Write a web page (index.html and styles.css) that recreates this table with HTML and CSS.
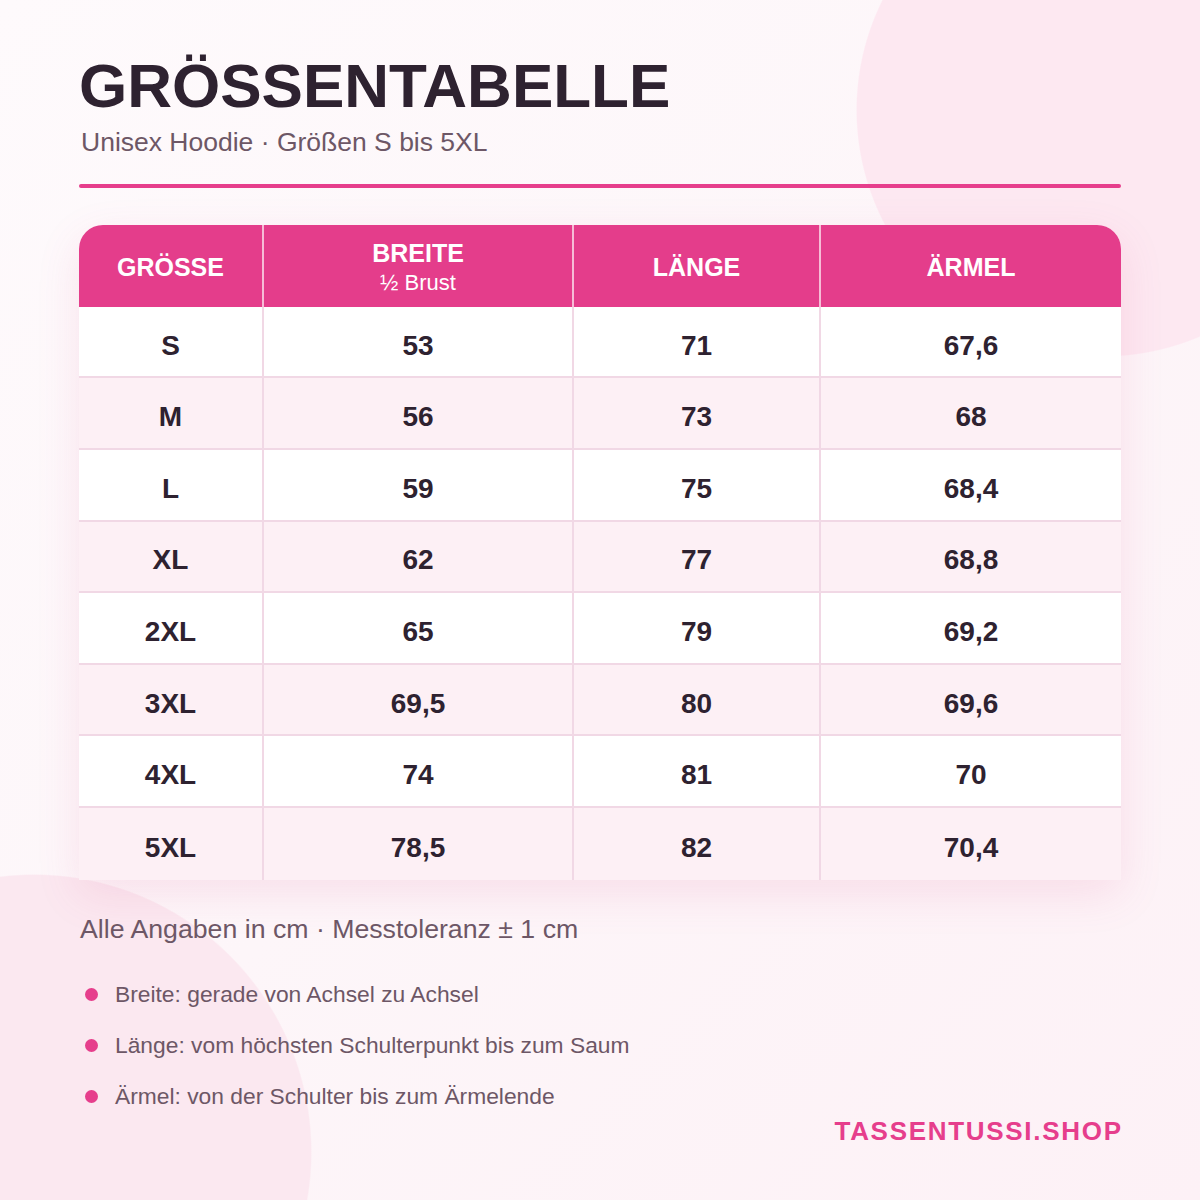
FILE: index.html
```html
<!DOCTYPE html>
<html lang="de">
<head>
<meta charset="utf-8">
<title>Größentabelle</title>
<link rel="stylesheet" href="styles.css">
</head>
<body>
<main class="page">
  <header class="head">
    <h1 class="title">GRÖSSENTABELLE</h1>
    <p class="subtitle">Unisex Hoodie · Größen S bis 5XL</p>
    <div class="rule"></div>
  </header>

  <section class="table">
    <div class="row row--head">
      <div class="cell cell--head">GRÖSSE</div>
      <div class="cell cell--head"><span class="hmain">BREITE</span><span class="hsub">½ Brust</span></div>
      <div class="cell cell--head">LÄNGE</div>
      <div class="cell cell--head">ÄRMEL</div>
    </div>
    <div class="row"><div class="cell">S</div><div class="cell">53</div><div class="cell">71</div><div class="cell">67,6</div></div>
    <div class="row row--alt"><div class="cell">M</div><div class="cell">56</div><div class="cell">73</div><div class="cell">68</div></div>
    <div class="row"><div class="cell">L</div><div class="cell">59</div><div class="cell">75</div><div class="cell">68,4</div></div>
    <div class="row row--alt"><div class="cell">XL</div><div class="cell">62</div><div class="cell">77</div><div class="cell">68,8</div></div>
    <div class="row"><div class="cell">2XL</div><div class="cell">65</div><div class="cell">79</div><div class="cell">69,2</div></div>
    <div class="row row--alt"><div class="cell">3XL</div><div class="cell">69,5</div><div class="cell">80</div><div class="cell">69,6</div></div>
    <div class="row"><div class="cell">4XL</div><div class="cell">74</div><div class="cell">81</div><div class="cell">70</div></div>
    <div class="row row--alt row--last"><div class="cell">5XL</div><div class="cell">78,5</div><div class="cell">82</div><div class="cell">70,4</div></div>
  </section>

  <p class="note">Alle Angaben in cm · Messtoleranz ± 1 cm</p>

  <ul class="list">
    <li class="item">Breite: gerade von Achsel zu Achsel</li>
    <li class="item">Länge: vom höchsten Schulterpunkt bis zum Saum</li>
    <li class="item">Ärmel: von der Schulter bis zum Ärmelende</li>
  </ul>

  <footer class="brand">TASSENTUSSI.SHOP</footer>
</main>
</body>
</html>
```

FILE: styles.css
```css
* { box-sizing: border-box; }

html, body {
  margin: 0;
  padding: 0;
}

body {
  width: 1200px;
  height: 1200px;
  overflow: hidden;
  font-family: "Liberation Sans", Arial, sans-serif;
  color: #2e2230;
  background:
    radial-gradient(circle 247px at 1103px 110px, #fde8f1 99.5%, rgba(253, 232, 241, 0) 100%),
    radial-gradient(circle 278px at 34px 1152px, #fbe8f0 99.5%, rgba(251, 232, 240, 0) 100%),
    linear-gradient(135deg, #fefafc 0%, #fdf6f9 50%, #fdf1f6 100%);
}

.page {
  padding: 55px 79px 0 79px;
  display: flex;
  flex-direction: column;
}

.title {
  margin: 0;
  font-size: 62px;
  line-height: 1;
  font-weight: 700;
  letter-spacing: 0;
  color: #2e2230;
}

.subtitle {
  margin: 10px 0 0 2px;
  font-size: 26.5px;
  line-height: 1.2;
  color: #6d5766;
}

.rule {
  margin-top: 25px;
  height: 4px;
  border-radius: 2px;
  background: #e63e8c;
}

.table {
  margin-top: 37px;
  border-radius: 24px 24px 0 0;
  overflow: hidden;
  background: #ffffff;
  box-shadow: 0 14px 44px rgba(214, 80, 140, 0.13);
}

.row {
  display: grid;
  grid-template-columns: 185px 310px 247px 1fr;
  height: 71.6px;
  border-bottom: 2px solid #f1d8e5;
  background: #ffffff;
}

.row--alt { background: #fdf0f5; }
.row--last { border-bottom: none; }

.row--head {
  height: 82px;
  border-bottom: none;
  background: #e43d8b;
}

.cell {
  display: flex;
  align-items: center;
  justify-content: center;
  padding-top: 8px;
  font-size: 28px;
  font-weight: 700;
  color: #2e2230;
  border-right: 2px solid #f1d8e5;
}

.cell:last-child { border-right: none; }

.cell--head {
  flex-direction: column;
  padding-top: 3px;
  font-size: 25px;
  color: #ffffff;
  border-right: 2px solid #f6bcd6;
}

.hmain { line-height: 1.2; }

.hsub {
  font-size: 22px;
  font-weight: 400;
  line-height: 1.2;
  margin-top: 2px;
}

.note {
  margin: 33px 0 0 1px;
  font-size: 26.7px;
  line-height: 1.2;
  color: #6d5766;
}

.list {
  list-style: none;
  margin: 36px 0 0 0;
  padding: 0;
  display: flex;
  flex-direction: column;
  gap: 24px;
}

.item {
  display: flex;
  align-items: center;
  font-size: 22.8px;
  line-height: 27px;
  color: #6d5766;
}

.item::before {
  content: "";
  width: 13px;
  height: 13px;
  border-radius: 50%;
  background: #e63e8c;
  margin: 0 17px 0 6px;
  flex: none;
}

.brand {
  margin-top: 6px;
  align-self: flex-end;
  font-size: 26px;
  line-height: 1.2;
  font-weight: 700;
  letter-spacing: 1.7px;
  margin-right: -1.7px;
  color: #e63e8c;
}
```
